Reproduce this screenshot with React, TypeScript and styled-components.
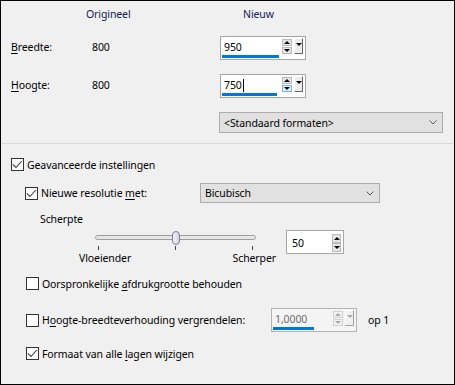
import React from 'react';
import styled, { createGlobalStyle } from 'styled-components';

const Global = createGlobalStyle`
  html, body { margin: 0; padding: 0; background: #f0f0f0; }
  body { font-family: "Noto Sans", "Open Sans", sans-serif; font-size: 10.5px; letter-spacing: -0.1px; color: #000; }
  * { box-sizing: border-box; }
`;

const Frame = styled.div`
  width: 455px;
  height: 385px;
  border: 1px solid #000;
  background: #f0f0f0;
  display: flex;
  flex-direction: column;
  overflow: hidden;
`;

const TopGrid = styled.div`
  display: grid;
  grid-template-columns: 75px 133px 1fr;
  grid-template-rows: 34px 38px 38px 21px;
  align-items: start;
  padding: 1px 0 0 10px;
`;

const Header = styled.div<{ $pad?: number }>`
  line-height: 24px;
  padding-left: ${(p) => p.$pad ?? 0}px;
  color: #14205a;
`;

const Label = styled.div`
  line-height: 23px;
`;

const OrigValue = styled.div<{ $pad?: number }>`
  line-height: 23px;
  padding-left: 6px;
`;

const FieldCell = styled.div`
  padding-left: 1px;
`;

const Mn = styled.span`
  text-decoration: underline;
  text-underline-offset: 1.5px;
  text-decoration-thickness: 1px;
`;

const Separator = styled.div`
  margin-top: 10px;
  height: 1px;
  background: #dadada;
`;

/* ---------- spin field ---------- */

const Field = styled.div<{ $w: number; $disabled?: boolean }>`
  width: ${(p) => p.$w}px;
  height: 24px;
  border: 1px solid ${(p) => (p.$disabled ? '#b4b4b4' : '#a6a6a6')};
  background: ${(p) => (p.$disabled ? '#f4f4f4' : '#fff')};
  display: flex;
  align-items: flex-start;
  gap: 2px;
  padding: 0 2px 0 1px;
  flex: none;
`;

const FieldText = styled.div<{ $w?: number; $top: number }>`
  ${(p) => (p.$w ? `width: ${p.$w}px;` : 'flex: 1;')}
  display: flex;
  flex-direction: column;
  padding-top: ${(p) => p.$top}px;
`;

const Value = styled.div<{ $disabled?: boolean; $pad: number }>`
  height: 16px;
  line-height: 16px;
  padding-left: ${(p) => p.$pad}px;
  color: ${(p) => (p.$disabled ? '#6d6d6d' : '#000')};
  display: flex;
  align-items: center;
`;

const Caret = styled.span`
  display: inline-block;
  width: 1px;
  height: 13px;
  background: #000;
  margin-left: 1px;
`;

const Bar = styled.div<{ $w: number }>`
  height: 3px;
  width: ${(p) => p.$w}px;
  background: #0078d7;
`;

const SpinCol = styled.div<{ $top: number; $gap: number }>`
  display: flex;
  flex-direction: column;
  gap: ${(p) => p.$gap}px;
  margin-top: ${(p) => p.$top}px;
`;

const SpinBtn = styled.div<{ $w: number; $h: number; $dir: 'up' | 'down'; $hot?: boolean; $disabled?: boolean }>`
  width: ${(p) => p.$w}px;
  height: ${(p) => p.$h}px;
  border: 1px solid ${(p) => (p.$hot ? '#7ab2e6' : p.$disabled ? '#d2d2d2' : '#b9b9b9')};
  background: ${(p) => (p.$hot ? '#e3effa' : p.$disabled ? '#f2f2f2' : '#e6e6e6')};
  display: flex;
  align-items: center;
  justify-content: center;
  &::after {
    content: '';
    width: 0;
    height: 0;
    border-left: 3px solid transparent;
    border-right: 3px solid transparent;
    ${(p) => (p.$dir === 'up' ? 'border-bottom' : 'border-top')}: 3px solid ${(p) => (p.$disabled ? '#a8a8a8' : '#000')};
  }
`;

const DropBtn = styled.div<{ $disabled?: boolean }>`
  width: 9px;
  height: 16px;
  margin-top: 1px;
  border-top: 1px solid #fff;
  border-left: 1px solid #fff;
  border-right: 1px solid ${(p) => (p.$disabled ? '#a0a0a0' : '#646464')};
  border-bottom: 1px solid ${(p) => (p.$disabled ? '#a0a0a0' : '#646464')};
  background: ${(p) => (p.$disabled ? '#f0f0f0' : '#ececec')};
  display: flex;
  justify-content: center;
  padding-top: 4px;
  &::after {
    content: '';
    width: 0;
    height: 0;
    border-left: 3px solid transparent;
    border-right: 3px solid transparent;
    border-top: 3px solid ${(p) => (p.$disabled ? '#a8a8a8' : '#000')};
  }
`;

type SizeFieldProps = {
  value: string;
  barWidth: number;
  caret?: boolean;
  hotDown?: boolean;
  disabled?: boolean;
};

function SizeField({ value, barWidth, caret, hotDown, disabled }: SizeFieldProps) {
  return (
    <Field $w={86} $disabled={disabled}>
      <FieldText $w={58} $top={2}>
        <Value $disabled={disabled} $pad={2}>
          {value}
          {caret && <Caret />}
        </Value>
        <Bar $w={barWidth} />
      </FieldText>
      <SpinCol $top={2} $gap={1}>
        <SpinBtn $w={10} $h={7} $dir="up" $disabled={disabled} />
        <SpinBtn $w={10} $h={7} $dir="down" $hot={hotDown} $disabled={disabled} />
      </SpinCol>
      <DropBtn $disabled={disabled} />
    </Field>
  );
}

/* ---------- combo ---------- */

const Combo = styled.div<{ $w: number; $h: number }>`
  width: ${(p) => p.$w}px;
  height: ${(p) => p.$h}px;
  border: 1px solid #adadad;
  background: #e1e1e1;
  display: flex;
  align-items: center;
  justify-content: space-between;
  padding: 0 5px 0 4px;
  flex: none;
`;

function Chevron() {
  return (
    <svg width="8" height="5" viewBox="0 0 8 5">
      <polyline points="0.5,0.5 4,4 7.5,0.5" fill="none" stroke="#5a5a5a" strokeWidth="1" />
    </svg>
  );
}

/* ---------- checkbox ---------- */

const Box = styled.span`
  width: 13px;
  height: 13px;
  border: 1px solid #333;
  background: #fff;
  display: inline-flex;
  align-items: center;
  justify-content: center;
  flex: none;
`;

function CheckBox({ checked }: { checked?: boolean }) {
  return (
    <Box>
      {checked && (
        <svg width="11" height="11" viewBox="0 0 11 11">
          <polyline points="0.8,5.3 4,8.5 9.8,2" fill="none" stroke="#3c3c3c" strokeWidth="1.1" />
        </svg>
      )}
    </Box>
  );
}

/* ---------- lower section ---------- */

const Advanced = styled.div`
  display: flex;
  flex-direction: column;
  padding-left: 10px;
`;

const Row = styled.div<{ $top: number; $h: number; $left?: number }>`
  display: flex;
  align-items: center;
  margin-top: ${(p) => p.$top}px;
  height: ${(p) => p.$h}px;
  padding-left: ${(p) => p.$left ?? 0}px;
`;

const CheckLabel = styled.label<{ $w?: number }>`
  display: flex;
  align-items: center;
  gap: 3px;
  ${(p) => (p.$w ? `width: ${p.$w}px; flex: none;` : '')}
`;

const Caption = styled.div<{ $top: number; $left: number }>`
  margin-top: ${(p) => p.$top}px;
  padding-left: ${(p) => p.$left}px;
  line-height: 16px;
`;

const SliderRow = styled.div`
  display: flex;
  align-items: flex-start;
  gap: 10px;
  margin-top: 3px;
  padding-left: 68px;
`;

const SliderCol = styled.div`
  width: 197px;
  display: flex;
  flex-direction: column;
`;

const Slider = styled.div`
  position: relative;
  height: 20px;
`;

const Track = styled.div`
  position: absolute;
  left: 16px;
  top: 5px;
  width: 161px;
  height: 5px;
  border: 1px solid #9c9c9c;
  border-radius: 3px;
  background: #e7e7e7;
`;

const Thumb = styled.div`
  position: absolute;
  left: 93px;
  top: 1px;
  width: 8px;
  height: 14px;
  border: 1px solid #7d7d8a;
  border-radius: 4px;
  background: linear-gradient(to right, #f2f2f8, #d4d4e2);
`;

const Tick = styled.div<{ $x: number }>`
  position: absolute;
  left: ${(p) => p.$x}px;
  top: 16px;
  width: 1px;
  height: 4px;
  background: #444;
`;

const SliderLabels = styled.div`
  display: flex;
  justify-content: space-between;
  line-height: 16px;
`;

const OpText = styled.span`
  margin-left: 11px;
`;

export default function App() {
  return (
    <>
      <Global />
      <Frame>
        <TopGrid>
          <div />
          <Header>Origineel</Header>
          <Header $pad={24}>Nieuw</Header>

          <Label>
            <Mn>B</Mn>reedte:
          </Label>
          <OrigValue>800</OrigValue>
          <FieldCell>
            <SizeField value="950" barWidth={57} />
          </FieldCell>

          <Label>
            <Mn>H</Mn>oogte:
          </Label>
          <OrigValue>800</OrigValue>
          <FieldCell>
            <SizeField value="750" caret hotDown barWidth={55} />
          </FieldCell>

          <div />
          <div />
          <Combo $w={224} $h={21}>
            <span>&lt;Standaard formaten&gt;</span>
            <Chevron />
          </Combo>
        </TopGrid>

        <Separator />

        <Advanced>
          <Row $top={14} $h={13}>
            <CheckLabel>
              <CheckBox checked />
              Geavanceerde instellingen
            </CheckLabel>
          </Row>

          <Row $top={12} $h={20} $left={14}>
            <CheckLabel $w={175}>
              <CheckBox checked />
              <span>
                Nieuwe resolutie <Mn>m</Mn>et:
              </span>
            </CheckLabel>
            <Combo $w={180} $h={20}>
              <span>Bicubisch</span>
              <Chevron />
            </Combo>
          </Row>

          <Caption $top={8} $left={29}>
            Scherpte
          </Caption>

          <SliderRow>
            <SliderCol>
              <Slider>
                <Track />
                <Tick $x={19} />
                <Tick $x={96} />
                <Tick $x={173} />
                <Thumb />
              </Slider>
              <SliderLabels>
                <span>Vloeiender</span>
                <span>Scherper</span>
              </SliderLabels>
            </SliderCol>
            <Field $w={58}>
              <FieldText $top={4}>
                <Value $pad={4}>50</Value>
              </FieldText>
              <SpinCol $top={3} $gap={0}>
                <SpinBtn $w={9} $h={9} $dir="up" />
                <SpinBtn $w={9} $h={9} $dir="down" />
              </SpinCol>
            </Field>
          </SliderRow>

          <Row $top={11} $h={13} $left={15}>
            <CheckLabel>
              <CheckBox />
              <span>
                Oorspronkelijke <Mn>a</Mn>fdrukgrootte behouden
              </span>
            </CheckLabel>
          </Row>

          <Row $top={18} $h={24} $left={15}>
            <CheckLabel $w={245}>
              <CheckBox />
              <span>
                H<Mn>o</Mn>ogte-breedteverhouding vergrendelen:
              </span>
            </CheckLabel>
            <SizeField value="1,0000" barWidth={41} disabled />
            <OpText>op 1</OpText>
          </Row>

          <Row $top={15} $h={13} $left={15}>
            <CheckLabel>
              <CheckBox checked />
              <span>
                Formaat van alle <Mn>l</Mn>agen wijzigen
              </span>
            </CheckLabel>
          </Row>
        </Advanced>
      </Frame>
    </>
  );
}
